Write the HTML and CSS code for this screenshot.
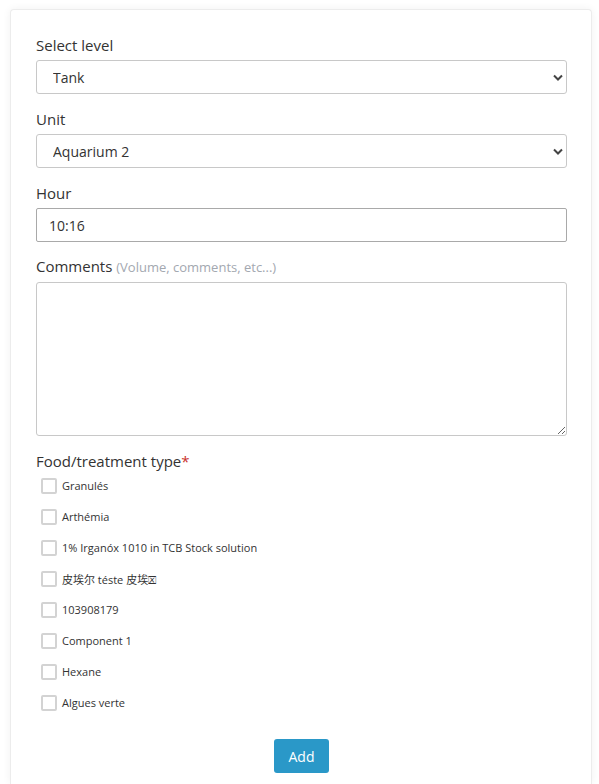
FILE: index.html
```html
<!DOCTYPE html>
<html lang="en">
<head>
    <meta charset="UTF-8">
    <meta name="viewport" content="width=device-width, initial-scale=1.0">
    <title>Add feeding</title>
    <link rel="stylesheet" href="styles.css">
</head>
<body>
    <div class="card">
        <form class="feed-form">
            <div class="field">
                <label for="level">Select level</label>
                <div class="select-wrap">
                    <select id="level" class="control select">
                        <option>Tank</option>
                    </select>
                    <svg class="chevron" width="10" height="7" viewBox="0 0 10 7"><path d="M1 1.5l4 4 4-4" fill="none" stroke="#444" stroke-width="2"/></svg>
                </div>
            </div>
            <div class="field">
                <label for="unit">Unit</label>
                <div class="select-wrap">
                    <select id="unit" class="control select">
                        <option>Aquarium 2</option>
                    </select>
                    <svg class="chevron" width="10" height="7" viewBox="0 0 10 7"><path d="M1 1.5l4 4 4-4" fill="none" stroke="#444" stroke-width="2"/></svg>
                </div>
            </div>
            <div class="field field-hour">
                <label for="hour">Hour</label>
                <input type="text" id="hour" class="control input" value="10:16">
            </div>
            <div class="field">
                <label for="comments">Comments <span class="hint">(Volume, comments, etc...)</span></label>
                <textarea id="comments" class="control textarea"></textarea>
            </div>
            <div class="field">
                <label>Food/treatment type<span class="req">*</span></label>
                <ul class="checks">
                    <li><span class="box"></span>Granulés</li>
                    <li><span class="box"></span>Arthémia</li>
                    <li><span class="box"></span>1% Irganóx 1010 in TCB Stock solution</li>
                    <li><span class="box"></span>皮埃尔 téste 皮埃&#x1F5F5;</li>
                    <li><span class="box"></span>103908179</li>
                    <li><span class="box"></span>Component 1</li>
                    <li><span class="box"></span>Hexane</li>
                    <li><span class="box"></span>Algues verte</li>
                </ul>
            </div>
            <div class="actions">
                <button type="button" class="btn">Add</button>
            </div>
        </form>
    </div>
</body>
</html>
```
FILE: styles.css
```css
body {
    font-family: "Open Sans", "Noto Sans CJK SC", sans-serif;
    background-color: #fff;
    margin: 0;
    padding: 9px 7px 0 10px;
    color: #333;
}
.card {
    background: #fff;
    border: 1px solid #ececec;
    border-bottom: none;
    border-radius: 4px 4px 0 0;
    box-shadow: 0 0 8px rgba(0, 0, 0, 0.06);
    padding: 26px 24px 11px 25px;
}
.feed-form {
    display: flex;
    flex-direction: column;
}
.field {
    display: flex;
    flex-direction: column;
    margin-bottom: 16px;
}
.field-hour {
    margin-bottom: 15px;
}
.field label {
    font-size: 15px;
    line-height: 19px;
    margin-bottom: 5px;
    color: #333;
}
.hint {
    font-size: 13px;
    color: #a3a8b0;
}
.req {
    color: #c9302c;
}
.control {
    box-sizing: border-box;
    width: 100%;
    font-family: inherit;
    font-size: 14px;
    color: #333;
    background: #fff;
    border: 1px solid #c8c8c8;
    border-radius: 3px;
    outline: none;
}
.select-wrap {
    position: relative;
}
.select {
    height: 34px;
    padding: 0 16px;
    appearance: none;
    -webkit-appearance: none;
}
.chevron {
    position: absolute;
    right: 4px;
    top: 14px;
    pointer-events: none;
}
.input {
    height: 34px;
    padding: 0 12px;
    border-color: #a9a9a9;
    border-radius: 2px;
}
.textarea {
    height: 154px;
    resize: vertical;
    padding: 8px 12px;
}
.checks {
    list-style: none;
    margin: -6px 0 0 0;
    padding: 0 0 0 5px;
}
.checks li {
    display: flex;
    align-items: center;
    height: 31px;
    font-size: 11px;
    color: #333;
}
.box {
    box-sizing: border-box;
    width: 16px;
    height: 16px;
    border: 2px solid #d3d3d3;
    border-radius: 2px;
    margin-right: 5px;
}
.actions {
    display: flex;
    justify-content: center;
    padding-top: 5px;
}
.btn {
    width: 55px;
    height: 34px;
    background-color: #2a98c8;
    color: #fff;
    border: none;
    border-radius: 3px;
    font-family: inherit;
    font-size: 14px;
    cursor: pointer;
}
```
